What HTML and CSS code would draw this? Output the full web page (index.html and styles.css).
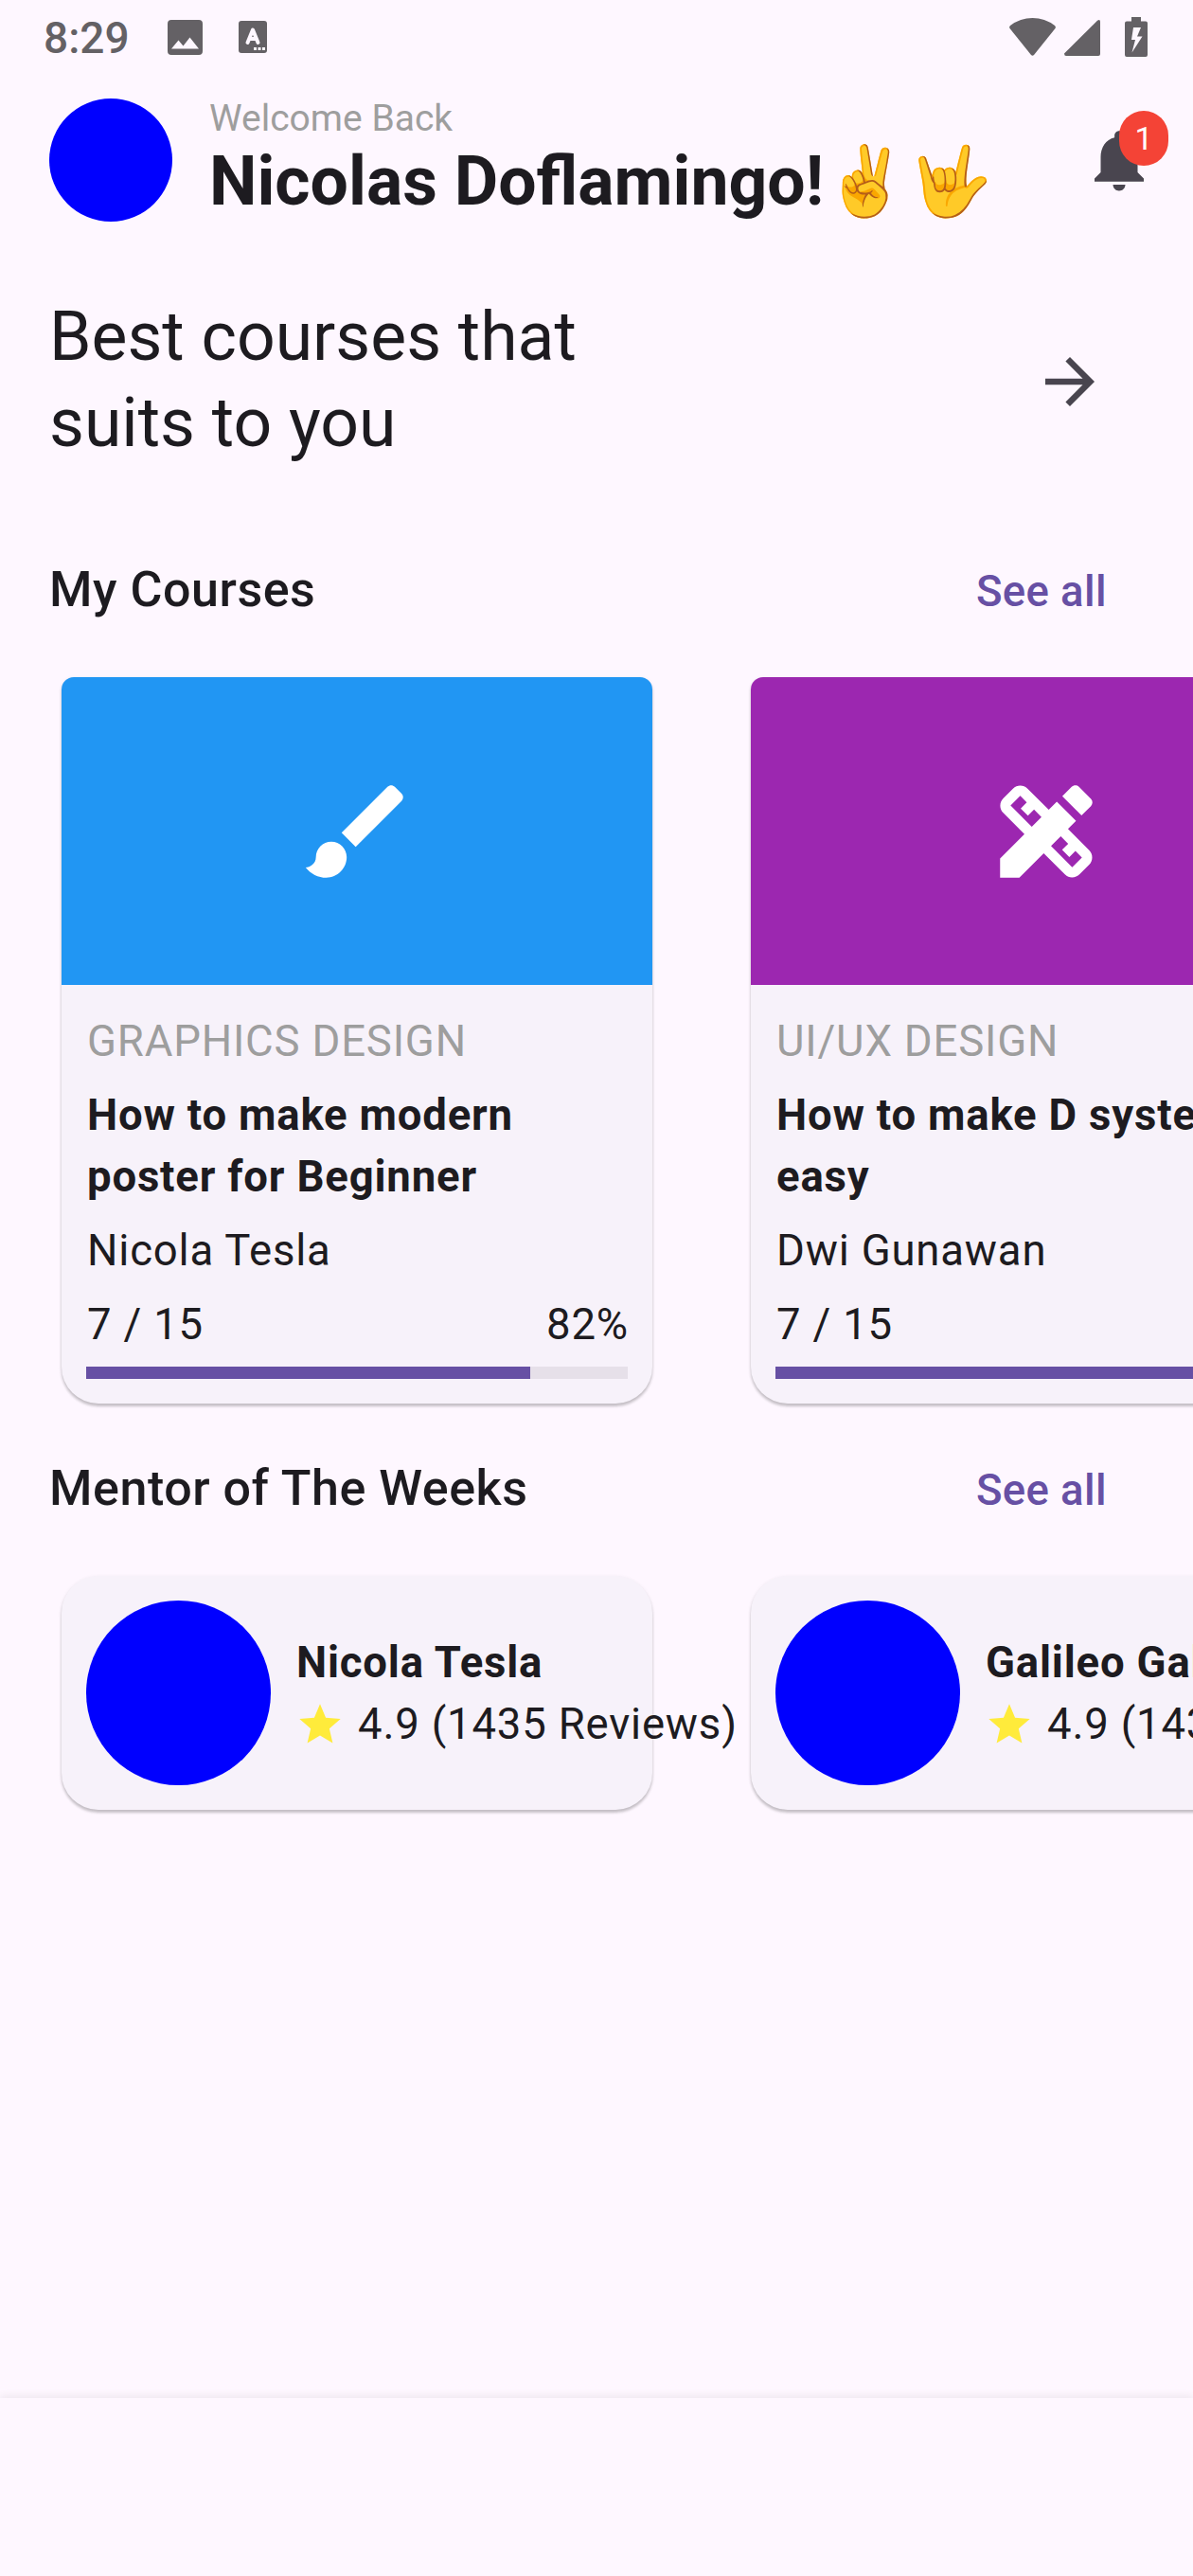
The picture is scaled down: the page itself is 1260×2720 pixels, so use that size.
FILE: index.html
```html
<!DOCTYPE html>
<html lang="en">
<head>
<meta charset="utf-8">
<title>Courses</title>
<link rel="stylesheet" href="styles.css">
</head>
<body>
<div class="screen">
  <div class="status-bar">
    <span class="clock">8:29</span>
    <svg class="st-image" viewBox="0 0 37 37"><path fill-rule="evenodd" d="M4 0H33a4 4 0 0 1 4 4V33a4 4 0 0 1-4 4H4a4 4 0 0 1-4-4V4a4 4 0 0 1 4-4zM4 30.500H33L23.500 18.500 16.500 27.500 11.500 21.500z"/></svg>
    <svg class="st-a" viewBox="0 0 30 34"><rect width="30" height="34" rx="3"/><path class="cut-line" d="M9.500 23L15 9.500L20.500 23M11.500 19H18.500"/><path class="cut" d="M16 28h3v3h-3zM20.500 28h3v3h-3zM25 28h3v3h-3z"/></svg>
    <span class="spacer"></span>
    <svg class="st-wifi" viewBox="0 0 49 40"><path d="M1 8Q11.500 0 24.500 0T48 8Q49.500 9.500 48.500 11L26 39Q24.500 40.500 23 39L.5 11Q-.5 9.500 1 8z"/></svg>
    <svg class="st-signal" viewBox="0 0 38 38"><path d="M35 .7Q38-1 38 2V36a2 2 0 0 1-2 2H2Q0 38 0 35.500z"/></svg>
    <svg class="st-battery" viewBox="0 0 24 42"><path fill-rule="evenodd" d="M7 0H17V4.500H22a2 2 0 0 1 2 2V40a2 2 0 0 1-2 2H2a2 2 0 0 1-2-2V6.500a2 2 0 0 1 2-2H7zM9 11L7 24h4L7.500 37.500 18.500 20.500H13L17 11z"/></svg>
  </div>

  <header class="profile">
    <div class="avatar"></div>
    <div class="greeting">
      <div class="welcome">Welcome Back</div>
      <div class="name">Nicolas Doflamingo!✌️🤟</div>
    </div>
    <div class="bell">
      <svg viewBox="0 0 24 24"><path d="M12 22c1.100 0 2-.9 2-2h-4c0 1.100.89 2 2 2zm6-6v-5c0-3.070-1.640-5.640-4.500-6.320V4c0-.83-.67-1.500-1.500-1.500s-1.500.67-1.500 1.500v.68C7.630 5.360 6 7.920 6 11v5l-2 2v1h16v-1l-2-2z"/></svg>
      <span class="badge">1</span>
    </div>
  </header>

  <section class="hero">
    <h1>Best courses that<br>suits to you</h1>
    <svg class="arrow" viewBox="0 0 24 24"><path d="M12 4l-1.410 1.410L16.170 11H4v2h12.170l-5.580 5.590L12 20l8-8z"/></svg>
  </section>

  <div class="section-head"><h2>My Courses</h2><a>See all</a></div>
  <div class="row">
    <article class="course">
      <div class="cover blue"><svg viewBox="0 0 24 24"><path d="M7 14c-1.660 0-3 1.340-3 3 0 1.310-1.160 2-2 2 .92 1.220 2.490 2 4 2 2.210 0 4-1.790 4-4 0-1.660-1.340-3-3-3zm13.710-9.370l-1.340-1.340c-.39-.39-1.020-.39-1.410 0L9 12.250 11.750 15l8.960-8.960c.39-.39.39-1.020 0-1.410z"/></svg></div>
      <div class="info">
        <div class="category">GRAPHICS DESIGN</div>
        <h3>How to make modern poster for Beginner</h3>
        <div>Nicola Tesla</div>
        <div class="stats"><span>7 / 15</span><span>82%</span></div>
      </div>
      <div class="track"><div class="fill" style="width:82%"></div></div>
    </article>
    <article class="course">
      <div class="cover purple"><svg viewBox="0 0 24 24"><path d="M16.240 11.510l1.570-1.570-3.750-3.750-1.570 1.570L8.350 3.630c-.78-.78-2.050-.78-2.830 0l-1.900 1.900c-.78.78-.78 2.050 0 2.830l4.130 4.130L3 17.250V21h3.750l4.760-4.760 4.130 4.130c.95.95 2.230.6 2.830 0l1.900-1.900c.78-.78.78-2.050 0-2.830L16.240 11.510zM9.180 11.070L5.040 6.940l1.890-1.900 1.270 1.270L7.020 7.500l1.410 1.410 1.190-1.190 1.450 1.450-1.890 1.900zM17.060 18.960l-4.130-4.130 1.900-1.900 1.450 1.450-1.190 1.190 1.410 1.410 1.190-1.190 1.270 1.270-1.900 1.900zM20.710 7.040c.39-.39.39-1.020 0-1.410l-2.340-2.340c-.47-.47-1.120-.29-1.410 0l-1.830 1.830 3.750 3.750 1.830-1.830z"/></svg></div>
      <div class="info">
        <div class="category">UI/UX DESIGN</div>
        <h3>How to make D system easy</h3>
        <div>Dwi Gunawan</div>
        <div class="stats"><span>7 / 15</span></div>
      </div>
      <div class="track"><div class="fill" style="width:82%"></div></div>
    </article>
  </div>

  <div class="section-head"><h2>Mentor of The Weeks</h2><a>See all</a></div>
  <div class="row">
    <article class="mentor">
      <div class="photo"></div>
      <div class="about">
        <h3>Nicola Tesla</h3>
        <div class="rating"><svg viewBox="0 0 24 24"><path d="M12 17.270L18.180 21l-1.640-7.030L22 9.240l-7.190-.61L12 2 9.190 8.630 2 9.240l5.460 4.730L5.820 21z"/></svg><span>4.9 (1435 Reviews)</span></div>
      </div>
    </article>
    <article class="mentor">
      <div class="photo"></div>
      <div class="about">
        <h3>Galileo Galilei</h3>
        <div class="rating"><svg viewBox="0 0 24 24"><path d="M12 17.270L18.180 21l-1.640-7.030L22 9.240l-7.190-.61L12 2 9.190 8.630 2 9.240l5.460 4.730L5.820 21z"/></svg><span>4.9 (1435 Reviews)</span></div>
      </div>
    </article>
  </div>

  <div class="spacer"></div>
  <nav class="bottom-bar"></nav>
</div>
</body>
</html>
```

FILE: styles.css
```css
* { box-sizing: border-box; }
body { margin: 0; background: #fef7ff; }
h1, h2, h3 { margin: 0; }
svg { display: block; flex: none; }
.spacer { flex: 1; }

.screen {
  width: 1260px;
  height: 2720px;
  overflow: hidden;
  display: flex;
  flex-direction: column;
  color: #1d1b20;
  font: 400 45.5px/65px Roboto, sans-serif;
  letter-spacing: 0.8125px;
}

.status-bar {
  height: 78px;
  padding: 0 48px 0 46px;
  display: flex;
  align-items: center;
  color: #646165;
  fill: #646165;
}
.clock { width: 131px; padding-top: 2px; font-size: 46px; font-weight: 500; letter-spacing: 0; white-space: nowrap; }
.st-image { width: 37px; height: 37px; }
.st-a { width: 30px; height: 34px; margin-left: 38px; }
.cut { fill: #fef7ff; }
.cut-line { fill: none; stroke: #fef7ff; stroke-width: 4; stroke-linecap: round; stroke-linejoin: round; }
.st-wifi { width: 49px; height: 40px; }
.st-signal { width: 38px; height: 38px; margin: 2px 26px 0 9px; }
.st-battery { width: 24px; height: 42px; }

.profile {
  height: 182px;
  padding: 0 39px 0 52px;
  display: flex;
  align-items: center;
}
.avatar { width: 130px; height: 130px; border-radius: 50%; background: #00f; }
.greeting { margin-left: 39px; padding-bottom: 4px; flex: 1; white-space: nowrap; }
.welcome { font-size: 39px; line-height: 50px; letter-spacing: 0; color: #9e9e9e; }
.name { font-size: 71.5px; line-height: 84px; font-weight: 700; letter-spacing: 0; }
.bell { position: relative; width: 78px; height: 78px; fill: #49454f; }
.bell svg { width: 78px; height: 78px; }
.badge {
  position: absolute;
  left: 39px;
  top: -13px;
  width: 52px;
  height: 58px;
  border-radius: 26px;
  background: #f44336;
  color: #fff;
  font-size: 34px;
  line-height: 59px;
  letter-spacing: 0;
  text-align: center;
}

.hero {
  height: 286px;
  padding: 0 91px 0 52px;
  display: flex;
  align-items: center;
  justify-content: space-between;
}
.hero h1 { padding-bottom: 4px; font-size: 71.5px; line-height: 91px; font-weight: 400; letter-spacing: 0; }
.arrow { width: 78px; height: 78px; fill: #49454f; }

.section-head {
  height: 156px;
  padding: 0 91px 0 52px;
  display: flex;
  align-items: center;
  justify-content: space-between;
}
.section-head h2 { padding-bottom: 2px; font-size: 52px; line-height: 78px; font-weight: 500; letter-spacing: 0.54px; }
.section-head a { color: #6750a4; font-weight: 500; letter-spacing: 0.4px; }

.row { display: flex; gap: 104px; padding: 13px 65px; }
.course, .mentor {
  width: 624px;
  flex: none;
  border-radius: 39px;
  background: #f7f2fa;
  box-shadow: 0 3px 3px rgba(0, 0, 0, 0.2), 0 1px 4px rgba(0, 0, 0, 0.07);
}
.course { border-radius: 13px 13px 39px 39px; padding-bottom: 26px; }
.cover {
  height: 325px;
  border-radius: 13px 13px 0 0;
  display: grid;
  place-items: center;
}
.cover svg { width: 130px; height: 130px; fill: #fff; }
.blue { background: #2196f3; }
.purple { background: #9c27b0; }
.info { padding: 27px 25px 12px 27px; display: flex; flex-direction: column; gap: 13px; }
.category { color: #9e9e9e; }
h3 { font-size: 45.5px; line-height: 65px; font-weight: 700; }
.stats { display: flex; justify-content: space-between; }
.track { height: 13px; margin: 0 26px; background: #e6e0e9; }
.fill { height: 13px; background: #6750a4; }

.mentor { height: 247px; padding: 26px; display: flex; align-items: center; gap: 26px; }
.photo { width: 195px; height: 195px; flex: none; border-radius: 50%; background: #00f; }
.about { padding-top: 1px; white-space: nowrap; }
.about h3 { padding-left: 1px; }
.rating { display: flex; align-items: center; gap: 14px; }
.rating svg { width: 52px; height: 52px; fill: #ffeb3b; }

.bottom-bar { height: 188px; background: #fef7ff; box-shadow: 0 -2px 8px rgba(0, 0, 0, 0.07); }
```
